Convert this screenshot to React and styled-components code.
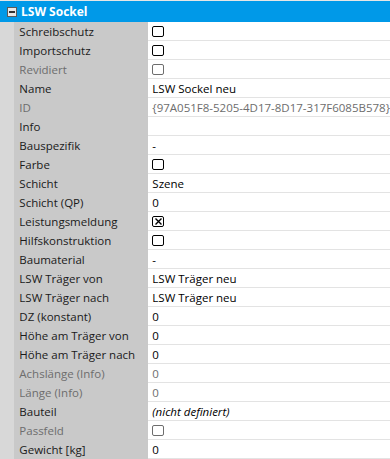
import styled, { createGlobalStyle } from 'styled-components';

const FONT = '"Open Sans", "Noto Sans", sans-serif';

const rows = [
  { label: 'Schreibschutz', type: 'check' },
  { label: 'Importschutz', type: 'check' },
  { label: 'Revidiert', type: 'check', disabled: true },
  { label: 'Name', value: 'LSW Sockel neu' },
  { label: 'ID', value: '{97A051F8-5205-4D17-8D17-317F6085B578}', disabled: true },
  { label: 'Info', value: '' },
  { label: 'Bauspezifik', value: '-' },
  { label: 'Farbe', type: 'check' },
  { label: 'Schicht', value: 'Szene' },
  { label: 'Schicht (QP)', value: '0' },
  { label: 'Leistungsmeldung', type: 'check', checked: true },
  { label: 'Hilfskonstruktion', type: 'check' },
  { label: 'Baumaterial', value: '-' },
  { label: 'LSW Träger von', value: 'LSW Träger neu' },
  { label: 'LSW Träger nach', value: 'LSW Träger neu' },
  { label: 'DZ (konstant)', value: '0' },
  { label: 'Höhe am Träger von', value: '0' },
  { label: 'Höhe am Träger nach', value: '0' },
  { label: 'Achslänge (Info)', value: '0', disabled: true },
  { label: 'Länge (Info)', value: '0', disabled: true },
  { label: 'Bauteil', value: '(nicht definiert)', italic: true },
  { label: 'Passfeld', type: 'check', disabled: true },
  { label: 'Gewicht [kg]', value: '0' },
];

function CheckBox({ checked, disabled }) {
  return (
    <Box $disabled={disabled}>
      {checked && (
        <svg width="9" height="9" viewBox="0 0 9 9">
          <path d="M1.5 1.5 L7.5 7.5 M7.5 1.5 L1.5 7.5" stroke="#000" strokeWidth="1.4" />
        </svg>
      )}
    </Box>
  );
}

export default function App() {
  return (
    <>
      <GlobalStyle />
      <Grid>
        <Header>
          <Toggle>
            <span />
          </Toggle>
          <Title>LSW Sockel</Title>
        </Header>
        <Body>
          <Gutter />
          <List>
            {rows.map(row => (
              <Row key={row.label}>
                <Label $disabled={row.disabled}>{row.label}</Label>
                <Value $disabled={row.disabled} $italic={row.italic}>
                  {row.type === 'check' ? (
                    <CheckBox checked={row.checked} disabled={row.disabled} />
                  ) : (
                    row.value
                  )}
                </Value>
              </Row>
            ))}
          </List>
        </Body>
      </Grid>
    </>
  );
}

const GlobalStyle = createGlobalStyle`
  * {
    box-sizing: border-box;
  }

  body {
    margin: 0;
    background: #fff;
    font-family: ${FONT};
  }
`;

const Grid = styled.div`
  width: 390px;
  border-top: 1px solid #e6e6e6;
`;

const Header = styled.div`
  display: flex;
  align-items: center;
  height: 21px;
  background-color: #0099e8;
`;

const Toggle = styled.div`
  display: flex;
  align-items: center;
  justify-content: center;
  width: 10px;
  height: 10px;
  margin-left: 7px;
  border: 1px solid #5a5a5a;
  background-color: #e8e8e8;

  span {
    width: 6px;
    height: 2px;
    background-color: #333;
  }
`;

const Title = styled.span`
  margin-left: 4px;
  color: #fff;
  font-weight: 700;
  font-size: 12px;
`;

const Body = styled.div`
  display: flex;
`;

const Gutter = styled.div`
  width: 17px;
  background-color: #d8d8d8;
`;

const List = styled.div`
  flex: 1;
`;

const Row = styled.div`
  display: grid;
  grid-template-columns: 134px 1fr;
  height: 19px;
`;

const Label = styled.div`
  padding-left: 5px;
  background-color: #c9c9c9;
  color: ${({ $disabled }) => ($disabled ? '#6d6d6d' : '#1a1a1a')};
  font-size: 11.5px;
  line-height: 19px;
  white-space: nowrap;
`;

const Value = styled.div`
  display: flex;
  align-items: center;
  padding-left: 4px;
  border-bottom: 1px solid #e3e3e3;
  color: ${({ $disabled }) => ($disabled ? '#6d6d6d' : '#000')};
  font-size: 11.5px;
  font-style: ${({ $italic }) => ($italic ? 'italic' : 'normal')};
  white-space: nowrap;
`;

const Box = styled.span`
  display: flex;
  align-items: center;
  justify-content: center;
  width: 12px;
  height: 11px;
  border: 1px solid ${({ $disabled }) => ($disabled ? '#6d6d6d' : '#000')};
  border-radius: 2px;
`;
